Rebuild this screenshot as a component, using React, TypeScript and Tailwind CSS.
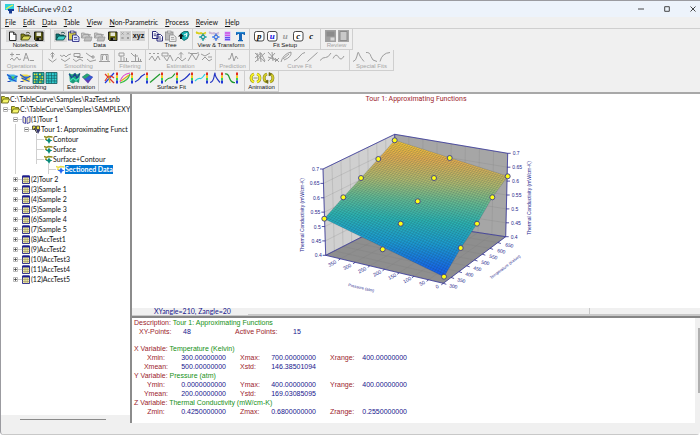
import { useState } from 'react';
import type { ReactNode } from 'react';
import clsx from 'clsx';

type Tool = { name: string; icon: ReactNode; pressed?: boolean };
type Group = { label: string; width: string; tools: Tool[]; disabled?: boolean };

const Icon = ({ children, wide }: { children: ReactNode; wide?: boolean }) => (
  <svg
    viewBox={wide ? '0 0 15 12' : '0 0 13 12'}
    className={wide ? 'h-3 w-[15px]' : 'h-3 w-[13px]'}
    fill="none"
    aria-hidden="true"
  >
    {children}
  </svg>
);

/* ---------- toolbar icons ---------- */

const NewDoc = () => (
  <Icon>
    <path d="M3.500 2h4l2.500 2.500V10.500H3.500z" fill="#fff" stroke="#222" />
    <path d="M7.500 2v2.500H10" stroke="#222" strokeWidth=".8" />
  </Icon>
);

const Folder = ({ back, front, edge }: { back: string; front: string; edge: string }) => (
  <Icon>
    <path d="M2 10V4h3l1 1h4v2" fill={back} stroke={edge} strokeWidth=".8" />
    <path d="M2 10l2.500-4H12l-2.500 4z" fill={front} stroke={edge} strokeWidth=".8" />
    <path d="M7 3q2-2 4 .5" stroke={edge} strokeWidth=".8" />
  </Icon>
);

const Floppy = ({ body }: { body: string }) => (
  <Icon>
    <path d="M2.500 2h8.500v8.500H3.500l-1-1z" fill={body} stroke="#111" strokeWidth=".9" />
    <rect x="4.500" y="2.500" width="4.500" height="3.500" fill="#e8e8dc" />
    <rect x="4.500" y="7.500" width="4.500" height="3" fill="#111" />
    <rect x="7.500" y="8" width="1" height="2" fill="#ddd" />
  </Icon>
);

const Paste = ({ board, page, ink }: { board: string; page: string; ink: string }) => (
  <Icon>
    <rect x="1.500" y="2" width="7.500" height="8" fill={board} stroke={ink} strokeWidth=".8" />
    <rect x="3.500" y="1" width="3.500" height="2" fill="#ddd" stroke={ink} strokeWidth=".6" />
    <path d="M5.500 5h4l2.500 2v4.500H5.500z" fill={page} stroke={ink} strokeWidth=".8" />
    <path d="M7 7.500h3M7 9.300h3.500" stroke={ink} strokeWidth=".7" />
  </Icon>
);

const Copy = () => (
  <Icon>
    <path d="M1.500 1.500h3.500l2 2v5H1.500zM6 4.500h3.500l2 2v4.500H6z" fill="#fff" stroke="#15156e" strokeWidth=".9" />
    <path d="M2.700 4h2.500M2.700 5.700h2.500M7.300 7h2.500M7.300 9h3" stroke="#15156e" strokeWidth=".8" />
  </Icon>
);

const GreyFolders = () => (
  <Icon>
    <path d="M1.500 8V3h3l1 1h3v2M1.500 8l2-3.500h7L8.500 8z" fill="#c9c9c9" stroke="#9b9b9b" strokeWidth=".8" />
    <path d="M4 11l1.500-4h6.500L11 11z" fill="#bdbdbd" stroke="#9b9b9b" strokeWidth=".8" />
  </Icon>
);

const GreyCells = () => (
  <Icon>
    <path d="M1 1h11v10H1z" fill="#d2d2d2" />
    <path d="M2.500 2.500l2 2m0-2l-2 2M8 2.500l2 2m0-2l-2 2M2.500 7l2 2m0-2l-2 2M8 7l2 2m0-2l-2 2" stroke="#999" />
  </Icon>
);

const Xyz = () => (
  <Icon>
    <path d="M0 1h13v10H0z" fill="#d2d2d2" />
    <text x="6.500" y="8" textAnchor="middle" fontSize="7" fontWeight="700" fill="#111" fontFamily="Liberation Sans, sans-serif">
      xyz
    </text>
  </Icon>
);

const Refresh = () => (
  <Icon>
    <path d="M4 3.500l3-2h4l1 3-1.500 4-3.500 2L4 8z" fill="#19b3b3" stroke="#065a5a" strokeWidth=".8" />
    <path d="M1 6.500L4 3.500l3 3H5v2.500H3V6.500z" fill="#111" />
    <path d="M7 5l3-1.500L9 7" stroke="#fff" />
  </Icon>
);

const Star = ({ main, accent }: { main: string; accent: string }) => (
  <Icon>
    <path d="M1 2l3 1.500L6 3l2 1 3-1.500" stroke={accent} strokeWidth="1.700" />
    <circle cx="2" cy="3" r="1" fill={accent} />
    <path d="M8 3.500L9.200 6l2.500 1-2.500 1L8 11 6.800 8 4 7l2.800-1z" fill={main} stroke={main} strokeWidth=".6" />
    <path d="M6 4.500l4 5m0-5l-4 5" stroke="#444" strokeWidth=".5" />
    <circle cx="8" cy="7" r="1" fill="#fff" />
  </Icon>
);

const Bars = () => (
  <Icon>
    <rect x="3.500" y="1.500" width="6" height="9.500" fill="#cdb6ff" />
    <path d="M4 3h5M4 5.300h5" stroke="#d04fe0" strokeWidth="1.300" />
    <path d="M4 7.600h5M4 9.700h5" stroke="#5a52ea" strokeWidth="1.300" />
  </Icon>
);

const BlueT = () => (
  <Icon>
    <path d="M2 2h9v3H9.500V4H8v6h1v1.300H4V10h1V4H3.500v1H2z" fill="#1667b8" />
    <path d="M2.500 2.400h8" stroke="#35a7e5" strokeWidth=".7" />
  </Icon>
);

const Letter = ({ ch, color, boxed }: { ch: string; color: string; boxed?: boolean }) => (
  <Icon>
    {boxed && <rect x="1.500" y="1.500" width="9.500" height="9.500" rx="2" fill="#fff" stroke="#333" strokeWidth=".9" />}
    <text x="6.300" y="8.500" textAnchor="middle" fontSize="9" fontWeight="700" fontStyle="italic" fill={color} fontFamily="Liberation Serif, serif">
      {ch}
    </text>
  </Icon>
);

const ReviewA = () => (
  <Icon>
    <path d="M1 0h11v12H1z" fill="#a0a0a0" />
    <path d="M2.500 1.500h8v5h-8z" fill="#8b8b8b" />
    <path d="M6.500 7.500h4v3h-4z" fill="#d8d8d8" />
  </Icon>
);

const ReviewB = () => (
  <Icon>
    <path d="M1 0h11v12H1z" fill="#a6a6a6" />
    <path d="M3 1.500h7v9H3z" fill="#c9c9c9" stroke="#8b8b8b" />
  </Icon>
);

const Curve = ({ d }: { d: string }) => (
  <Icon>
    <path d={d} stroke="#9c9c9c" strokeWidth="1" strokeLinejoin="round" />
  </Icon>
);

const Contour = ({ alt }: { alt?: boolean }) => (
  <Icon>
    <path d="M1 2.500h7l3.500 1.500-1 5.500H4L2.500 6z" fill={alt ? '#ecd94a' : '#3fb6e8'} />
    <path d="M1 2.500l6 4 4.500-2.500M2.500 6l8 3.500" stroke="#1c50d0" strokeWidth="1.200" />
    <path d="M5 4.500h4l-2 3z" fill={alt ? '#2c6be0' : '#52d04a'} />
    <path d="M1.500 9.500h3" stroke="#2b4bb8" />
  </Icon>
);

const Cells = ({ a, b }: { a: string; b: string }) => (
  <Icon>
    <path d="M1 .5h11v11H1z" fill={a} stroke="#14585a" strokeWidth=".8" />
    <path d="M2 2.500h3M7 2.500h2M9 5h2M3 5h3M8 7.500h3M2 7.500h3M2 10h2M7 10h3" stroke={b} strokeWidth="1.600" />
    <path d="M3.700.5v11M6.500.5v11M9.300.5v11M1 3.700h11M1 6.300h11M1 9h11" stroke="#14585a" strokeWidth=".6" />
  </Icon>
);

const SurfaceA = () => (
  <Icon>
    <path d="M1 1l3 1.500L7 1l2 1.500L12 1 11 11l-3-1.500L5 11.500 2 10z" fill="#1e9c7c" />
    <path d="M1 2l3 4 3-4 2 4 3-4.500" stroke="#1d3f91" strokeWidth="1.200" />
    <path d="M2 9l3-3 3 2.500L11 6" stroke="#3fe0b4" strokeWidth="1.200" />
  </Icon>
);

const SurfaceB = () => (
  <Icon>
    <path d="M1 5L6 1.500 12 5l-5 6.500z" fill="#5f3bb0" />
    <path d="M1 5L6 1.500l3 1.500L4 7z" fill="#2aa873" />
    <path d="M4 7l5-3 3 1-5 3.500z" fill="#2b63d4" />
  </Icon>
);

const FitCurve = ({ lines }: { lines: [string, string][] }) => (
  <Icon wide>
    {lines.map(([d, color]) => (
      <path key={d} d={d} stroke={color} strokeWidth="1.200" />
    ))}
    <path d="M13 .5v3" stroke="#e03020" strokeWidth="2" />
    <path d="M13 3.500v2.500" stroke="#f5d21c" strokeWidth="2" />
    <path d="M13 6v2.500" stroke="#3ccf5a" strokeWidth="2" />
    <path d="M13 8.500v3" stroke="#2038d8" strokeWidth="2" />
  </Icon>
);

const Spin = ({ full }: { full?: boolean }) => (
  <Icon>
    <path d="M5 2A4.200 4.200 0 0 0 5 10M8 2A4.200 4.200 0 0 1 8 10" stroke="#77741c" strokeWidth="2.800" />
    <path d="M5 2A4.200 4.200 0 0 0 5 10M8 2A4.200 4.200 0 0 1 8 10" stroke={full ? '#cfc82a' : '#f4ee20'} strokeWidth="1.900" />
    <path d={full ? 'M7 .5v3.500l2.500-2zM6 8v3.500L3.500 9.500z' : 'M4.500 6h4'} fill={full ? '#6d6a18' : 'none'} stroke="#6d6a18" strokeWidth=".7" />
  </Icon>
);

/* ---------- toolbar data ---------- */

const rowOne: Group[] = [
  {
    label: 'Notebook',
    width: 'w-[50px]',
    tools: [
      { name: 'New notebook', icon: <NewDoc />, pressed: true },
      { name: 'Open notebook', icon: <Folder back="#8a8a18" front="#d9d95a" edge="#333310" />, pressed: true },
      { name: 'Save notebook', icon: <Floppy body="#5a5a12" />, pressed: true },
    ],
  },
  {
    label: 'Data',
    width: 'w-[98px]',
    tools: [
      { name: 'Open data', icon: <Folder back="#0c7a7a" front="#3fd0c8" edge="#063c3c" />, pressed: true },
      { name: 'Paste data', icon: <Paste board="#d8cf4a" page="#dfe6ff" ink="#1b1b7a" /> },
      { name: 'Import', icon: <GreyFolders /> },
      { name: 'Append', icon: <GreyFolders /> },
      { name: 'Save data', icon: <Floppy body="#7d7d18" /> },
      { name: 'Edit cells', icon: <GreyCells /> },
      { name: 'XYZ data', icon: <Xyz /> },
    ],
  },
  {
    label: 'Tree',
    width: 'w-[44px]',
    tools: [
      { name: 'Copy', icon: <Copy /> },
      { name: 'Paste', icon: <Paste board="#bbb" page="#eee" ink="#8c8c8c" /> },
      { name: 'Restore', icon: <Refresh /> },
    ],
  },
  {
    label: 'View & Transform',
    width: 'w-[57px]',
    tools: [
      { name: 'Surface view', icon: <Star main="#12a0a0" accent="#d9cf1c" /> },
      { name: 'Sectioned view', icon: <Star main="#3c78f0" accent="#c9b6d8" /> },
      { name: 'Numeric', icon: <Bars /> },
      { name: 'Transform', icon: <BlueT /> },
    ],
  },
  {
    label: 'Fit Setup',
    width: 'w-[71px]',
    tools: [
      { name: 'Parametric', icon: <Letter ch="p" color="#111" boxed /> },
      { name: 'User functions', icon: <Letter ch="u" color="#1414e0" boxed /> },
      { name: 'User fit', icon: <Letter ch="u" color="#9a9a9a" /> },
      { name: 'Constants', icon: <Letter ch="c" color="#111" boxed /> },
      { name: 'Custom', icon: <Letter ch="c" color="#111" /> },
    ],
  },
  {
    label: 'Review',
    width: 'w-[32px]',
    disabled: true,
    tools: [
      { name: 'Review fit', icon: <ReviewA /> },
      { name: 'Review list', icon: <ReviewB /> },
    ],
  },
];

const rowTwo: Group[] = [
  {
    label: 'Operations',
    width: 'w-[42px]',
    disabled: true,
    tools: [
      { name: 'Add', icon: <Curve d="M1 3.500h4M3 1.500v4M7 3.500h4M1 9l2-2 2 2.500L8 6l2 3 2-1" /> },
      { name: 'Baseline', icon: <Curve d="M1.500 10L4 2l3 8M2.500 7h3.500M8 9.500h4" /> },
    ],
  },
  {
    label: 'Smoothing',
    width: 'w-[72px]',
    disabled: true,
    tools: [
      { name: 'Raise', icon: <Curve d="M6.500 1.500v6M4.500 3.500l2-2 2 2M5 5h3M2.500 8l4 3 4-3" /> },
      { name: 'Smooth', icon: <Curve d="M1 4l2 1.500L5 4l2 2 2-2 3-1M2 8l4 2.500L11 7" /> },
      { name: 'Section', icon: <Curve d="M2 2.500h6v3H2zM5 6.500h6M1 8l3 2.500L8 8l3 2" /> },
      { name: 'Slope', icon: <Curve d="M1 2l4 3 3 1M8 4v4M6 6h4M2 8l3 2.500L11 9" /> },
      { name: 'Peak', icon: <Curve d="M1 10.500h11M3 10.500v-7h7v7M4.500 9V5l2-2 2 2v4" /> },
    ],
  },
  {
    label: 'Filtering',
    width: 'w-[31px]',
    disabled: true,
    tools: [
      { name: 'FFT filter', icon: <Curve d="M2 2h5v3H2zM4 5v5M1 10.500h11M7 6v4.500M9.500 7v3.500" /> },
      { name: 'Threshold', icon: <Curve d="M1 2l3 3h4M5.500 3v7M1 10.500h11M8.500 6.500v4M10.500 8v2.500" /> },
    ],
  },
  {
    label: 'Estimation',
    width: 'w-[70px]',
    disabled: true,
    tools: [
      { name: 'Interpolate', icon: <Curve d="M1 2.500h2M5 2.500h2M9 2.500h2M1 9l3-4 3 5 3-5 2 4" /> },
      { name: 'Evaluate', icon: <Curve d="M1 2h6v3H1zM3 6l3 4 3-6 3 6" /> },
      { name: 'Integrate', icon: <Curve d="M7 1.500v6M5 3.500l2-2 2 2M1 10l3-4 4 4 4-3" /> },
      { name: 'Nodes', icon: <Curve d="M1 2h2M10 2h2M1 10L5 3l4 6 3-6M3 2.500l7 0" /> },
      { name: 'Derivative', icon: <Curve d="M1 3l4 2 5-3M2 9l3-3 4 4 3-2M8 6h4" /> },
    ],
  },
  {
    label: 'Prediction',
    width: 'w-[34px]',
    disabled: true,
    tools: [{ name: 'Predict', icon: <Curve d="M2 8h2l2-6 2 8 2-5 2 3" /> }],
  },
  {
    label: 'Curve Fit',
    width: 'w-[100px]',
    disabled: true,
    tools: [
      { name: 'All equations', icon: <Curve d="M1 2l10 9M1 11L11 2M6 1l1 10M1 7l6-5 4 8M3 2l1 8" /> },
      { name: 'Simple equations', icon: <Curve d="M1 1l8 9M1 10L8 2M5 1l1 9M8 7l4 4M12 7l-4 4M1 6l8 3" /> },
      { name: 'Peak set', icon: <Curve d="M1 11Q3 3 11 1Q12 6 4 9M3 8l6-5" /> },
      { name: 'Polynomial', icon: <Curve d="M1 10Q5 8 7 5T12 1.500" /> },
      { name: 'Linear', icon: <Curve d="M1.500 10.500l10-9" /> },
      { name: 'Rational', icon: <Curve d="M1 9.500Q4 6 6.500 6.500T12 2" /> },
      { name: 'Waveform', icon: <Curve d="M1 7.500Q4 1.500 6.500 6T12 5" /> },
    ],
  },
  {
    label: 'Special Fits',
    width: 'w-[44px]',
    disabled: true,
    tools: [
      { name: 'Peak', icon: <Curve d="M1 10.500Q4 10 5 5T6.500 1.500 8 5t4 5.500" /> },
      { name: 'Transition', icon: <Curve d="M1 1.500Q5 1 6 5.500T12 10.500" /> },
      { name: 'Kinetic', icon: <Curve d="M2 10.500Q4 2 12 1.500" /> },
    ],
  },
];

const fitLines: [string, string][][] = [
  [['M1 2l9 9', '#e03a2a'], ['M1 11L10 1', '#1c3be0'], ['M4 1l2 10', '#e6c81a'], ['M1 9Q5 1 10 6', '#e03a2a']],
  [['M1 10Q3 2 11 1', '#e248c8'], ['M1 11Q9 9 11 2', '#3cc04a'], ['M2 9l8-6', '#e6a81a']],
  [['M1 10Q5 8 6 6T11 2', '#2536c4']],
  [['M1 10.500L11 2', '#1f9a2c']],
  [['M1 9.500Q4 6 6 6T11 1.500', '#1f9a2c']],
  [['M1 9.500Q4 8 6 6.500T11 1.500', '#2536c4']],
  [['M1 9Q4 6 6 6.500T11 2', '#27d0e0']],
  [['M1 10.500Q4 10 5 5T6 1.500 7 5t4 5.500', '#2536c4']],
  [['M1 2Q4 1 5.500 6T11 10.500', '#1f9a2c']],
];

const rowThree: Group[] = [
  {
    label: 'Smoothing',
    width: 'w-[63px]',
    tools: [
      { name: 'Contour smooth', icon: <Contour /> },
      { name: 'Surface smooth', icon: <Contour alt /> },
      { name: 'Sparse grid', icon: <Cells a="#2bb5a8" b="#f2ea32" /> },
      { name: 'Dense grid', icon: <Cells a="#2bc0c6" b="#37d7d7" /> },
    ],
  },
  {
    label: 'Estimation',
    width: 'w-[35px]',
    tools: [
      { name: 'Estimate surface', icon: <SurfaceA /> },
      { name: 'Estimate spline', icon: <SurfaceB /> },
    ],
  },
  {
    label: 'Surface Fit',
    width: 'w-[146px]',
    tools: fitLines.map((lines, i) => ({ name: `Surface fit ${i + 1}`, icon: <FitCurve lines={lines} /> })),
  },
  {
    label: 'Animation',
    width: 'w-[34px]',
    tools: [
      { name: 'Animate', icon: <Spin /> },
      { name: 'Rotate', icon: <Spin full /> },
    ],
  },
];

const ToolRow = ({ groups }: { groups: Group[] }) => (
  <div className="flex h-[21px] overflow-hidden">
    {groups.map(({ label, width, tools, disabled }) => (
      <div
        key={label}
        className={clsx(
          'flex shrink-0 flex-col items-center border-r border-b border-[#cfcfcf] pt-px',
          width
        )}
      >
        <div className="flex">
          {tools.map((tool) => (
            <button
              key={tool.name}
              type="button"
              aria-label={tool.name}
              disabled={disabled}
              className={clsx('block', tool.pressed && 'bg-[#d6d6d6]')}
            >
              {tool.icon}
            </button>
          ))}
        </div>
        <span
          className={clsx(
            'text-[6px] leading-[7px] whitespace-nowrap',
            disabled ? 'text-[#a6a6a6]' : 'text-[#111]'
          )}
        >
          {label}
        </span>
      </div>
    ))}
  </div>
);

/* ---------- tree ---------- */

type Kind = 'folder' | 'book' | 'graphs' | 'view' | 'section' | 'table';
type Node = { text: string; level: number; kind: Kind; open?: boolean; leaf?: boolean; guides?: number[] };

const indents = ['w-[10px]', 'w-[11px]', 'w-[10px]', 'w-[12px]', 'w-[12px]'];

const samples = ['Tour 2', 'Sample 1', 'Sample 2', 'Sample 3', 'Sample 4', 'Sample 5', 'AccTest1', 'AccTest2', 'AccTest3', 'AccTest4', 'AccTest5'];

const nodes: Node[] = [
  { text: 'C:\\TableCurve\\Samples\\RazTest.snb', level: 0, kind: 'folder', open: true },
  { text: 'C:\\TableCurve\\Samples\\SAMPLEXY', level: 1, kind: 'folder', open: true },
  { text: '(1)Tour 1', level: 2, kind: 'book', open: true },
  { text: 'Tour 1: Approximating Funct', level: 3, kind: 'graphs', open: true, guides: [2] },
  { text: 'Contour', level: 4, kind: 'view', leaf: true, guides: [2, 4] },
  { text: 'Surface', level: 4, kind: 'view', leaf: true, guides: [2, 4] },
  { text: 'Surface+Contour', level: 4, kind: 'view', leaf: true, guides: [2, 4] },
  { text: 'Sectioned Data', level: 5, kind: 'section', leaf: true, guides: [2, 5] },
  ...samples.map((name, i): Node => ({ text: `(${i + 2})${name}`, level: 2, kind: 'table' })),
];

const TreeIcon = ({ kind }: { kind: Kind }) => (
  <svg viewBox="0 0 9 9" className="h-[9px] w-[9px] shrink-0" fill="none" aria-hidden="true">
    {kind === 'folder' && (
      <>
        <path d="M.5 8V1.500h3l1 1h3V4" fill="#d8d83c" stroke="#55550a" strokeWidth=".8" />
        <path d="M.5 8l1.800-4h6.200L7 8z" fill="#f4f46a" stroke="#55550a" strokeWidth=".8" />
      </>
    )}
    {kind === 'book' && (
      <path d="M1 1.500L3.500 2.500v6L1 7.500zM8 1.500L5 2.500v6l3-1z" fill="#f6f2c8" stroke="#2b2ba0" strokeWidth=".8" />
    )}
    {kind === 'graphs' && (
      <>
        <path d="M.5 1h3v3.500h-3zM4.500 1h3v3.500h-3z" fill="#e6dd3c" stroke="#333" strokeWidth=".8" />
        <path d="M2 3l3 5" stroke="#333" />
        <path d="M4 4.500h4.500L6 9z" fill="#3a3a70" />
      </>
    )}
    {(kind === 'view' || kind === 'section') && (
      <>
        <path d="M0 1.500l2.500 1L4.500 1.500l4 .5M1 4l2 .5" stroke={kind === 'view' ? '#8f8a18' : '#e8dc4a'} strokeWidth="1.400" />
        <path d="M5 2.500L6.200 4.500l2.300 1-2.300 1L5 9 3.800 6.500l-2.300-1 2.300-1z" fill={kind === 'view' ? '#0c8a7a' : '#2468f0'} />
      </>
    )}
    {kind === 'table' && (
      <>
        <path d="M.5 1h7v7.500h-7z" fill="#f2ecb0" stroke="#1c1c8c" strokeWidth=".9" />
        <path d="M.5 1.500h7" stroke="#1c1c8c" strokeWidth="2" />
        <path d="M3 2v6.500M5.200 2v6.500M.5 4.500h7M.5 6.500h7" stroke="#9a9460" strokeWidth=".6" />
      </>
    )}
  </svg>
);

const TreeRow = ({ node, selected, onSelect }: { node: Node; selected: boolean; onSelect: () => void }) => (
  <li role="treeitem" aria-selected={selected} className="flex h-[10px] items-center">
    {indents.slice(0, node.level).map((indent, i) => (
      <span key={i} className={clsx('flex h-full shrink-0 items-center', indent)}>
        {i + 1 === node.level && !node.leaf ? (
          <>
            <svg viewBox="0 0 5 5" className="ml-[2px] h-[5px] w-[5px]" aria-hidden="true">
              <path d="M.5.5h4v4h-4z" fill="#fff" stroke="#aaa" strokeWidth=".8" />
              <path d={node.open ? 'M1 2.500h3' : 'M1 2.500h3M2.500 1v3'} stroke="#333" strokeWidth=".7" />
            </svg>
            <span className="h-px flex-1 bg-[#d0d0d0]" />
          </>
        ) : (
          node.guides?.includes(i + 1) && (
            <span className="ml-[4px] flex h-full flex-1 items-center border-l border-[#d0d0d0]">
              {i + 1 === node.level && <span className="h-px flex-1 bg-[#d0d0d0]" />}
            </span>
          )
        )}
      </span>
    ))}
    <TreeIcon kind={node.kind} />
    <button
      type="button"
      onClick={onSelect}
      className={clsx(
        'block text-left leading-[9px] whitespace-nowrap',
        selected && 'bg-[#0078d7] font-bold text-white'
      )}
    >
      {node.text}
    </button>
  </li>
);

/* ---------- surface plot ---------- */

type Pt = [number, number];
const box = {
  leftTop: [323, 169] as Pt,
  backTop: [394.700, 134.300] as Pt,
  rightTop: [507.700, 153.300] as Pt,
  leftBottom: [325.700, 255.300] as Pt,
  backBottom: [395, 220] as Pt,
  rightBottom: [505.700, 236.700] as Pt,
  frontBottom: [443.300, 283.300] as Pt,
};
const leftEdge: Pt[] = [[324.300, 218.700], [343.300, 197.300], [361, 178], [378.300, 159], [394.700, 140.300]];
const midEdge: Pt[] = [[382.700, 249.300], [400.700, 223.700], [417.700, 201.300], [434, 178], [449.700, 158]];
const rightEdge: Pt[] = [[444, 276.700], [460.700, 248], [477, 223.700], [492.300, 197.300], [507.700, 176.300]];

const mix = (a: Pt, b: Pt, t: number): Pt => [a[0] + (b[0] - a[0]) * t, a[1] + (b[1] - a[1]) * t];
const along = (edge: Pt[], t: number): Pt => {
  const i = Math.min(Math.floor(t * 4), 3);
  return mix(edge[i], edge[i + 1], t * 4 - i);
};
const pts = (list: Pt[]) => list.map((p) => p.join(',')).join(' ');
const steps = (n: number) => Array.from({ length: n + 1 }, (_, i) => i / n);

const gridOn = (a: Pt, b: Pt, c: Pt, d: Pt, n: number) =>
  steps(n).map((t) => `M${mix(a, b, t)}L${mix(c, d, t)}`).join('');

const meshPath =
  steps(50).map((t) => `M${along(leftEdge, t)}L${along(rightEdge, t)}`).join('') +
  steps(50).map((t) => `M${leftEdge.map((p, i) => mix(p, rightEdge[i], t)).join('L')}`).join('');

const zTicks = ['0.7', '0.65', '0.6', '0.55', '0.5', '0.45', '0.4'];
const pressureTicks = ['350', '300', '250', '200', '150', '100', '50', '0'];
const kelvinTicks = ['300', '350', '400', '450', '500', '550', '600', '650'];

const SurfacePlot = () => {
  const { leftTop, backTop, rightTop, leftBottom, backBottom, rightBottom, frontBottom } = box;
  return (
    <svg
      viewBox="132 105 568 203"
      className="min-h-0 w-full flex-1"
      role="img"
      aria-label="Surface plot of thermal conductivity"
      fontFamily="Liberation Sans, sans-serif"
      fontSize="5"
      fill="#26268c"
    >
      <defs>
        <linearGradient id="heat" gradientUnits="userSpaceOnUse" x1="405" y1="138" x2="395" y2="277">
          <stop offset="0" stopColor="#f8cc30" />
          <stop offset=".14" stopColor="#e8b050" />
          <stop offset=".3" stopColor="#b2bc70" />
          <stop offset=".44" stopColor="#64bc94" />
          <stop offset=".58" stopColor="#2cb4b2" />
          <stop offset=".74" stopColor="#1c9cd0" />
          <stop offset="1" stopColor="#1450f0" />
        </linearGradient>
      </defs>
      <polygon points={pts([leftTop, backTop, backBottom, leftBottom])} fill="#d0d0d0" />
      <polygon points={pts([backTop, rightTop, rightBottom, backBottom])} fill="#a6a6a6" />
      <polygon points={pts([leftBottom, backBottom, rightBottom, frontBottom])} fill="#8e8e8e" />
      <g stroke="#777" strokeOpacity=".35" strokeWidth=".6" fill="none">
        <path d={gridOn(leftTop, leftBottom, backTop, backBottom, 6)} />
        <path d={gridOn(leftTop, backTop, leftBottom, backBottom, 8)} />
        <path d={gridOn(backTop, backBottom, rightTop, rightBottom, 6)} />
        <path d={gridOn(backTop, rightTop, backBottom, rightBottom, 8)} />
        <path d={gridOn(leftBottom, backBottom, frontBottom, rightBottom, 8)} />
        <path d={gridOn(leftBottom, frontBottom, backBottom, rightBottom, 8)} />
      </g>
      <path
        d={`M${leftBottom}L${leftTop}L${backTop}L${rightTop}L${rightBottom}L${frontBottom}L${leftBottom}L${backBottom}L${rightBottom}M${backTop}L${backBottom}`}
        stroke="#34349a"
        strokeWidth=".8"
        fill="none"
      />
      <polygon points={pts([...leftEdge, ...[...rightEdge].reverse()])} fill="url(#heat)" />
      <path d={meshPath} stroke="#243c50" strokeOpacity=".36" strokeWidth=".5" fill="none" />
      {[...leftEdge, ...midEdge, ...rightEdge].map(([x, y]) => (
        <circle key={`${x}-${y}`} cx={x} cy={y} r="2.500" fill="#ffff14" stroke="#3a3a90" strokeWidth=".9" />
      ))}

      {zTicks.map((label, i) => {
        const l = mix(leftTop, leftBottom, i / 6);
        const r = mix(rightTop, rightBottom, i / 6);
        return (
          <g key={label}>
            <path d={`M${l}h-3M${r}h3`} stroke="#26268c" strokeWidth=".8" />
            <text x={l[0] - 4} y={l[1] + 2} textAnchor="end">{label}</text>
            <text x={r[0] + 5} y={r[1] + 2}>{label}</text>
          </g>
        );
      })}
      {pressureTicks.map((label, i) => {
        const [x, y] = mix([333, 264], [438, 287], i / 7);
        const [tx, ty] = mix(leftBottom, frontBottom, (i + 1) / 8);
        return (
          <g key={label}>
            <path d={`M${tx},${ty}l-2,1.500`} stroke="#26268c" strokeWidth=".8" />
            <text textAnchor="middle" transform={`translate(${x} ${y + 1}) rotate(-28)`}>{label}</text>
          </g>
        );
      })}
      {kelvinTicks.map((label, i) => {
        const [x, y] = mix([453, 286], [509, 245], i / 7);
        const [tx, ty] = mix(frontBottom, rightBottom, i / 8);
        return (
          <g key={label}>
            <path d={`M${tx},${ty}l3,1`} stroke="#26268c" strokeWidth=".8" />
            <text textAnchor="middle" transform={`translate(${x} ${y + 2}) rotate(12)`}>{label}</text>
          </g>
        );
      })}
      <text textAnchor="middle" transform="translate(304 215) rotate(-90)">Thermal Conductivity (mW/cm-K)</text>
      <text textAnchor="middle" transform="translate(531 198) rotate(-90)">Thermal Conductivity (mW/cm-K)</text>
      <text textAnchor="middle" fontSize="4" transform="translate(361 289) rotate(13)">Pressure (atm)</text>
      <text textAnchor="middle" fontSize="4" transform="translate(506 268) rotate(-37)">Temperature (Kelvin)</text>
    </svg>
  );
};

/* ---------- statistics ---------- */

const stats = [
  {
    axis: 'X',
    title: 'Temperature (Kelvin)',
    rows: [
      ['Xmin:', '300.00000000', 'Xmax:', '700.00000000', 'Xrange:', '400.00000000'],
      ['Xmean:', '500.00000000', 'Xstd:', '146.38501094', '', ''],
    ],
  },
  {
    axis: 'Y',
    title: 'Pressure (atm)',
    rows: [
      ['Ymin:', '0.0000000000', 'Ymax:', '400.00000000', 'Yrange:', '400.00000000'],
      ['Ymean:', '200.00000000', 'Ystd:', '169.03085095', '', ''],
    ],
  },
  {
    axis: 'Z',
    title: 'Thermal Conductivity (mW/cm-K)',
    rows: [['Zmin:', '0.4250000000', 'Zmax:', '0.6800000000', 'Zrange:', '0.2550000000']],
  },
];

const Stats = () => (
  <div className="min-w-0 flex-1 overflow-hidden pl-[2px] font-['Liberation_Sans',sans-serif] leading-[9px] text-[#9c1c2c]">
    <p>
      Description: <span className="text-[#159015]">Tour 1: Approximating Functions</span>
    </p>
    <p className="flex pl-[5px]">
      <span className="w-[44px]">XY-Points:</span>
      <span className="w-[52px] text-[#16168c]">48</span>
      <span className="w-[58px]">Active Points:</span>
      <span className="text-[#16168c]">15</span>
    </p>
    <table className="mt-2 w-[273px] table-fixed">
      <colgroup>
        <col className="w-[44px]" />
        <col className="w-[48px]" />
        <col className="w-[43px]" />
        <col className="w-[47px]" />
        <col className="w-[43px]" />
        <col className="w-[48px]" />
      </colgroup>
      {stats.map(({ axis, title, rows }) => (
        <tbody key={axis}>
          <tr>
            <th colSpan={6} className="p-0 text-left font-normal">
              {axis} Variable: <span className="text-[#159015]">{title}</span>
            </th>
          </tr>
          {rows.map((row) => (
            <tr key={row[0]}>
              {row.map((cell, i) => (
                <td
                  key={i}
                  className={clsx(
                    'p-0',
                    i % 2 === 1 && 'text-right text-[#16168c]',
                    i === 0 && 'text-center',
                    (i === 2 || i === 4) && 'pl-[14px]'
                  )}
                >
                  {cell}
                </td>
              ))}
            </tr>
          ))}
        </tbody>
      ))}
    </table>
  </div>
);

const menus = ['File', 'Edit', 'Data', 'Table', 'View', 'Non-Parametric', 'Process', 'Review', 'Help'];

export default function App() {
  const [selected, setSelected] = useState('Sectioned Data');

  return (
    <div className="flex h-screen min-h-[300px] flex-col overflow-hidden rounded-b border-t border-l border-[#9b9ba0] bg-[#f0f0f0] font-[Lato,sans-serif] text-[7px] text-[#111]">
      {/* Title bar */}
      <header className="flex h-4 shrink-0 items-center bg-[#edf3fb] pl-[4px]">
        <svg viewBox="0 0 10 10" className="h-[10px] w-[10px]" aria-hidden="true">
          <path d="M0 0h9v6H0z" fill="#2fd0dc" />
          <path d="M1 5l3-2 4-2" stroke="#e7f04a" strokeWidth="1.200" fill="none" />
          <path d="M3 5h6v2H7v2.500H4V7H3z" fill="#183c94" />
        </svg>
        <h1 className="pl-[2px]">TableCurve v9.0.2</h1>
        <div className="ml-auto flex gap-3">
          <button type="button" aria-label="Minimize" className="flex h-4 w-[14px] items-center justify-center">
            <svg viewBox="0 0 6 6" className="h-[6px] w-[6px]"><path d="M0 3h6" stroke="#333" strokeWidth=".9" /></svg>
          </button>
          <button type="button" aria-label="Maximize" className="flex h-4 w-[14px] items-center justify-center">
            <svg viewBox="0 0 6 6" className="h-[6px] w-[6px]"><path d="M.7.7h4.600v4.600H.7z" stroke="#333" strokeWidth=".9" fill="none" /></svg>
          </button>
          <button type="button" aria-label="Close" className="flex h-4 w-[14px] items-center justify-center">
            <svg viewBox="0 0 6 6" className="h-[6px] w-[6px]"><path d="M.5.5l5 5m0-5l-5 5" stroke="#333" strokeWidth=".9" /></svg>
          </button>
        </div>
      </header>

      {/* Menu */}
      <nav className="flex h-3 shrink-0 items-center gap-[7px] border-b border-[#cfcfcf] pl-[4px]">
        {menus.map((item) => (
          <button key={item} type="button" className="leading-[11px]">
            <u className="underline-offset-1">{item[0]}</u>
            {item.slice(1)}
          </button>
        ))}
      </nav>

      {/* Toolbars */}
      <div className="shrink-0 border-b-2 border-[#a8a8a8] font-['Liberation_Sans',sans-serif]">
        <ToolRow groups={rowOne} />
        <ToolRow groups={rowTwo} />
        <ToolRow groups={rowThree} />
      </div>

      <main className="flex min-h-0 flex-1">
        {/* Notebook tree */}
        <aside className="flex w-[129px] shrink-0 flex-col overflow-hidden">
          <ul role="tree" className="min-h-0 flex-1 overflow-hidden bg-white">
            {nodes.map((node) => (
              <TreeRow
                key={node.text}
                node={node}
                selected={selected === node.text}
                onSelect={() => setSelected(node.text)}
              />
            ))}
          </ul>
          <div className="flex h-2 shrink-0 items-center pl-[19px]">
            <div className="h-px w-[86px] bg-[#8a8a8a]" />
          </div>
        </aside>

        <div className="flex min-w-0 flex-1 flex-col border-l-2 border-[#8c8c8c]">
          <section className="flex min-h-0 flex-1 flex-col bg-white">
            <h2 className="h-[11px] shrink-0 text-center font-[Roboto,sans-serif] leading-[11px] text-[#9c1c2c]">
              Tour 1: Approximating Functions
            </h2>
            <SurfacePlot />
          </section>
          <div className="flex h-2 shrink-0 border-b border-[#c8c8c8]">
            <div className="w-[116px] pl-[22px] leading-[7px] whitespace-nowrap text-[#16168c]">
              XYangle=210, Zangle=20
            </div>
            <div className="flex-1 border-r border-b border-[#c8c8c8]" />
            <div className="w-[110px] border-b border-[#c8c8c8]" />
          </div>
          <section className="flex h-[107px] shrink-0 border-t-2 border-[#858585] bg-white">
            <Stats />
            <div className="flex w-[5px] shrink-0 justify-end bg-[#f0f0f0]">
              <div className="mt-[10px] h-[65px] w-[2px] bg-[#b0b0b0]" />
            </div>
          </section>
        </div>
      </main>

      <footer className="h-3 shrink-0 border-b border-[#c8c8c8]" />
    </div>
  );
}
